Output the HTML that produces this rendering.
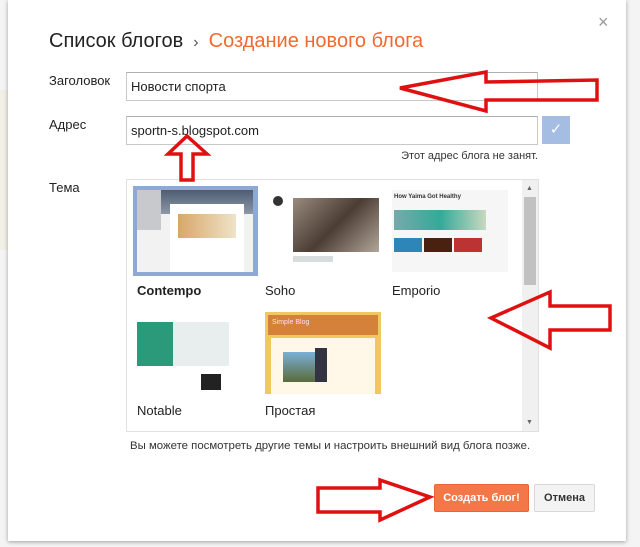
<!DOCTYPE html>
<html><head><meta charset="utf-8"><style>
*{margin:0;padding:0;box-sizing:border-box}
body{width:640px;height:547px;background:#f4f4f4;position:relative;overflow:hidden;font-family:"Liberation Sans",Arial,sans-serif;color:#222}
.abs{position:absolute}
.dlg{left:8px;top:0;width:618px;height:541px;background:#fff;box-shadow:0 1px 4px rgba(0,0,0,.35)}
.bgstrip{left:0;top:90px;width:8px;height:160px;background:#f2f0e6}
.inp{border:1px solid #c8c8c8;border-top-color:#b0b0b0;background:#fff;font-size:13px;padding:0 4px;line-height:28px;height:29px}
.lbl{font-size:13px;color:#222}
.th{position:absolute;width:116px;height:82px;overflow:hidden;background:#fafafa}
.nm{position:absolute;font-size:13px;color:#222}
</style></head><body>
<div class="abs bgstrip"></div>
<div class="abs dlg"></div>
<div class="abs" style="left:598px;top:12px;font-size:18px;color:#999">×</div>
<div class="abs" style="left:49px;top:30px;font-size:20px;color:#222">Список блогов <span style="color:#555;font-size:16px">&nbsp;›&nbsp;</span> <span style="color:#f06a2e">Создание нового блога</span></div>
<div class="abs lbl" style="left:49px;top:73px">Заголовок</div>
<div class="abs inp" style="left:126px;top:72px;width:412px">Новости спорта</div>
<div class="abs lbl" style="left:49px;top:117px">Адрес</div>
<div class="abs inp" style="left:126px;top:116px;width:412px">sportn-s.blogspot.com</div>
<div class="abs" style="left:542px;top:116px;width:28px;height:28px;background:#a5bde2;color:#fff;text-align:center;line-height:28px;font-size:15px">✓</div>
<div class="abs" style="right:102px;top:150px;font-size:11px;color:#333">Этот адрес блога не занят.</div>
<div class="abs lbl" style="left:49px;top:180px">Тема</div>
<div class="abs" style="left:126px;top:179px;width:413px;height:253px;border:1px solid #e0e0e0"></div>
<div class="abs" style="left:522px;top:180px;width:16px;height:251px;background:#f0f0f0"></div>
<div class="abs" style="left:524px;top:197px;width:12px;height:88px;background:#c1c1c1"></div>
<div class="abs" style="left:526px;top:185px;font-size:7px;color:#666">▲</div>
<div class="abs" style="left:526px;top:419px;font-size:7px;color:#666">▼</div>
<div class="abs" style="left:133px;top:186px;width:125px;height:90px;background:#8fa9d6"></div>
<div class="th" style="left:137px;top:190px;background:#f2f2f2">
 <div class="abs" style="left:24px;top:0;width:92px;height:24px;background:linear-gradient(#4e5d73,#8d98a8)"></div>
 <div class="abs" style="left:0;top:0;width:24px;height:40px;background:#c7c9cd"></div>
 <div class="abs" style="left:33px;top:14px;width:74px;height:68px;background:#fff"></div>
 <div class="abs" style="left:41px;top:24px;width:58px;height:24px;background:linear-gradient(90deg,#d9a66a,#efe3c8)"></div>
</div>
<div class="th" style="left:265px;top:190px;background:#fff">
 <div class="abs" style="left:28px;top:8px;width:86px;height:54px;background:linear-gradient(135deg,#9a8a7e,#4b3d33 50%,#b2a699)"></div>
 <div class="abs" style="left:8px;top:6px;width:10px;height:10px;border-radius:50%;background:#333"></div>
 <div class="abs" style="left:28px;top:66px;width:40px;height:6px;background:#d7dcdc"></div>
</div>
<div class="th" style="left:392px;top:190px;background:#f6f6f6">
 <div class="abs" style="left:2px;top:4px;font-size:6px;font-weight:bold;color:#333">How Yaima Got Healthy</div>
 <div class="abs" style="left:2px;top:20px;width:92px;height:20px;background:linear-gradient(90deg,#7aa,#3a9 50%,#c9d8c0)"></div>
 <div class="abs" style="left:2px;top:48px;width:28px;height:14px;background:#2e86b8"></div>
 <div class="abs" style="left:32px;top:48px;width:28px;height:14px;background:#4a2010"></div>
 <div class="abs" style="left:62px;top:48px;width:28px;height:14px;background:#b33"></div>
</div>
<div class="nm" style="left:137px;top:283px;font-weight:bold">Contempo</div>
<div class="nm" style="left:265px;top:283px">Soho</div>
<div class="nm" style="left:392px;top:283px">Emporio</div>
<div class="th" style="left:137px;top:312px;background:#fff">
 <div class="abs" style="left:0;top:10px;width:36px;height:44px;background:#2a9a7a"></div>
 <div class="abs" style="left:36px;top:10px;width:56px;height:44px;background:#e8eeee"></div>
 <div class="abs" style="left:64px;top:62px;width:20px;height:16px;background:#222"></div>
</div>
<div class="th" style="left:265px;top:312px;background:#f0c860">
 <div class="abs" style="left:3px;top:3px;width:110px;height:20px;background:#d6813a;color:#fde;font-size:7px;padding:4px">Simple Blog</div>
 <div class="abs" style="left:6px;top:26px;width:104px;height:56px;background:#fff8e8"></div>
 <div class="abs" style="left:18px;top:40px;width:38px;height:30px;background:linear-gradient(#7ab0d8,#5b6a3a)"></div>
 <div class="abs" style="left:50px;top:36px;width:12px;height:34px;background:#334"></div>
</div>
<div class="nm" style="left:137px;top:403px">Notable</div>
<div class="nm" style="left:265px;top:403px">Простая</div>
<div class="abs" style="left:130px;top:440px;font-size:11.4px;color:#333">Вы можете посмотреть другие темы и настроить внешний вид блога позже.</div>
<div class="abs" style="left:434px;top:484px;width:95px;height:28px;background:#f4774a;border:1px solid #e8653a;border-radius:2px;color:#fff;font-size:11px;font-weight:bold;text-align:center;line-height:26px">Создать блог!</div>
<div class="abs" style="left:534px;top:484px;width:61px;height:28px;background:#f3f3f3;border:1px solid #d8d8d8;border-radius:2px;color:#333;font-size:11px;font-weight:bold;text-align:center;line-height:26px">Отмена</div>
<svg class="abs" style="left:0;top:0" width="640" height="547">
<g fill="none" stroke="#e01010" stroke-width="3.5" stroke-linejoin="miter">
<polygon points="400,88 486,72 486,82 597,80 597,100 486,100 486,111"/>
<polygon points="187,136 207,154 193,154 193,180 181,180 181,154 168,154"/>
<polygon points="491,318 550,292 550,306 610,306 610,330 550,330 550,348"/>
<polygon points="430,497 380,480 380,488 318,488 318,512 380,512 380,520"/>
</g>
</svg>
</body></html>
